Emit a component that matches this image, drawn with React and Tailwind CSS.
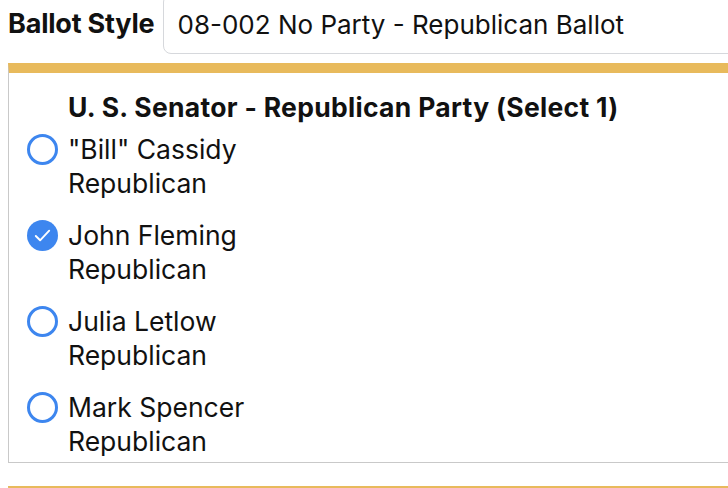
const candidates = [
  { name: '"Bill" Cassidy', party: "Republican", checked: false },
  { name: "John Fleming", party: "Republican", checked: true },
  { name: "Julia Letlow", party: "Republican", checked: false },
  { name: "Mark Spencer", party: "Republican", checked: false },
];

function Radio({ checked }) {
  if (checked) {
    return (
      <span className="mt-[2px] flex h-[31px] w-[31px] shrink-0 items-center justify-center rounded-full bg-[#3d86ef]">
        <svg width="23" height="23" viewBox="0 0 24 24" fill="none">
          <path d="M5 12.5l4.5 4.5 9.5-10" stroke="white" strokeWidth="2" strokeLinecap="round" strokeLinejoin="round" />
        </svg>
      </span>
    );
  }
  return <span className="mt-[2px] h-[31px] w-[31px] shrink-0 rounded-full border-[3px] border-[#3d86ef] bg-white" />;
}

export default function App() {
  return (
    <div className="h-[488px] w-[728px] overflow-hidden bg-white text-[#111] font-['Inter','Liberation_Sans',sans-serif]">
      {/* ballot style picker */}
      <div className="-mt-[6px] flex items-center pl-2">
        <span className="text-[27px] font-bold tracking-[-0.2px]">Ballot Style</span>
        <div className="ml-[8px] -mr-[20px] flex h-[60px] flex-1 items-center rounded-lg border border-[#d6d8dc] pl-[14px] text-[26px]">
          08-002 No Party - Republican Ballot
        </div>
      </div>

      {/* contest card */}
      <div className="ml-2 -mr-[20px] mt-[9px] border-t-[10px] border-l border-b border-t-[#e8ba5c] border-l-[#c9c9c9] border-b-[#c9c9c9] pb-[4px] pt-[17px]">
        <h2 className="pl-[59px] text-[26.5px] font-bold leading-[34px] tracking-[0.3px]">
          U. S. Senator - Republican Party (Select 1)
        </h2>
        <div className="mt-[8px] flex flex-col gap-[18px]">
          {candidates.map((c) => (
            <label key={c.name} className="flex items-start gap-[10px] pl-[18px]">
              <Radio checked={c.checked} />
              <div className="text-[26.5px] leading-[34px]">
                <div>{c.name}</div>
                <div>{c.party}</div>
              </div>
            </label>
          ))}
        </div>
      </div>

      {/* next contest, cut off */}
      <div className="ml-2 -mr-[20px] mt-[23px] h-10 border-t-[10px] border-l border-t-[#e8ba5c] border-l-[#c9c9c9]" />
    </div>
  );
}
